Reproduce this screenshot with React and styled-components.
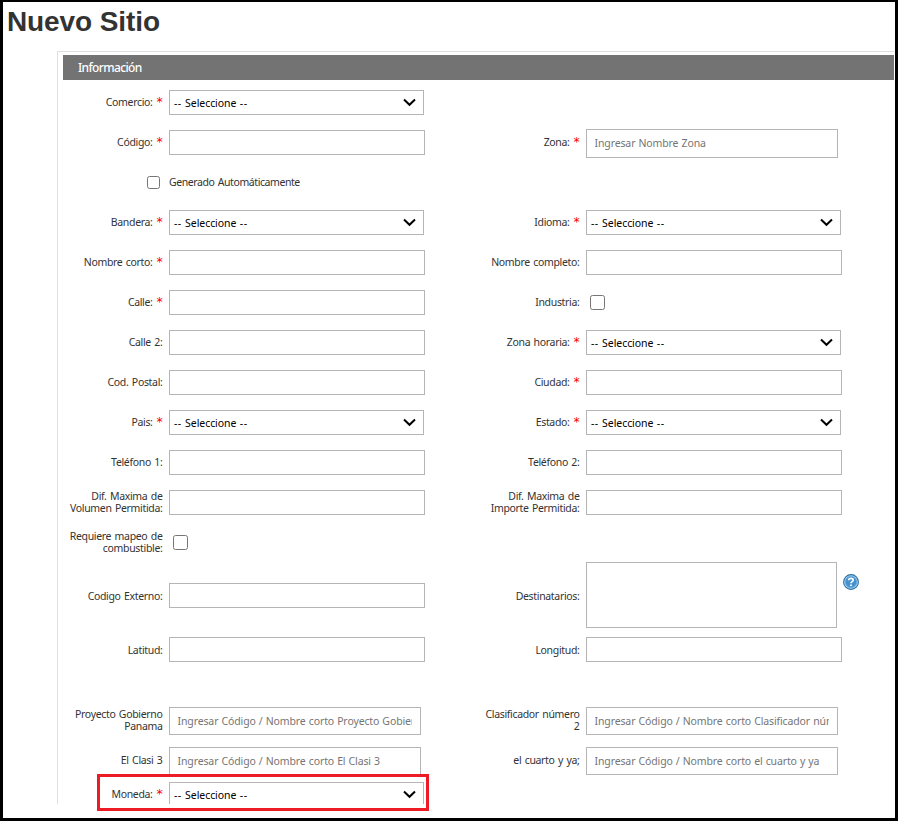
import React from "react";
import styled, { createGlobalStyle } from "styled-components";

const GlobalStyle = createGlobalStyle`
  *, *::before, *::after { box-sizing: border-box; }
  body {
    margin: 0;
    background: #fff;
    color: #333;
    font-family: "Noto Sans", "Open Sans", sans-serif;
    font-size: 10.5px;
  }
`;

const Frame = styled.main`
  position: relative;
  width: 898px;
  height: 821px;
  padding-left: 54px;
  overflow: hidden;
  background: #fff;
  border: 3px solid #000;
  border-top-width: 2px;
`;

const Title = styled.h1`
  height: 49px;
  margin: 0 0 0 -50px;
  padding-top: 4px;
  color: #333;
  font: bold 28px/32px "Liberation Sans", Arial, sans-serif;
  letter-spacing: -0.1px;
`;

const Panel = styled.section`
  width: 837px;
  height: 753px;
  padding: 3px 0 0 5px;
  overflow: hidden;
  border: solid #dfe0dc;
  border-width: 1px 0 0 1px;
`;

const PanelHeader = styled.h2`
  height: 25px;
  margin: 0 0 3px;
  padding-left: 15px;
  background: #737373;
  color: #fff;
  font-size: 12px;
  font-weight: 500;
  line-height: 25px;
  letter-spacing: -0.65px;
`;

const Row = styled.div`
  display: flex;
  height: ${(p) => p.$height || 39}px;
  margin-top: ${(p) => p.$top || 0}px;
  margin-bottom: ${(p) => p.$bottom || 0}px;
`;

const Cell = styled.div`
  display: flex;
  flex: none;
  align-items: center;
  gap: 6px;
  width: 417px;
`;

const Label = styled.label`
  flex: none;
  width: 100px;
  padding-top: ${(p) => (p.$shift > 0 ? p.$shift * 2 : 0)}px;
  padding-right: 0.5px;
  padding-bottom: ${(p) => 1 + (p.$shift < 0 ? -p.$shift * 2 : 0)}px;
  text-align: right;
  line-height: 12px;
  letter-spacing: -0.33px;
  word-spacing: 1px;
  white-space: pre-line;
`;

const Required = styled.span`
  margin-left: 4px;
  color: #f00;
  font: 12.5px/10px "DejaVu Sans", sans-serif;
`;

const TextInput = styled.input`
  width: 256px;
  height: 25px;
  padding: 0 4px;
  background: #fff;
  border: 1px solid #b5b5b5;
  border-radius: 0;
  font: inherit;
`;

const LookupInput = styled(TextInput)`
  width: 252px;
  height: ${(p) => p.$height || 28}px;
  margin-top: ${(p) => p.$top || 0}px;
  padding: 0 8px ${(p) => p.$top || 0}px 7.5px;
  letter-spacing: -0.12px;
  word-spacing: 0.5px;

  &::placeholder { color: #757575; opacity: 1; }
`;

const SelectBox = styled.div`
  display: flex;
  align-items: center;
  justify-content: space-between;
  width: 255px;
  height: 25px;
  padding: 0 7px 0 4px;
  border: 1px solid #b5b5b5;
  color: #000;
  line-height: 23px;
`;

const SelectText = styled.span`
  padding-top: 2px;
  line-height: 21px;
  letter-spacing: -0.07px;
  word-spacing: 0.9px;
`;

const Dashes = styled.span`
  letter-spacing: 0.4px;
`;

const Checkbox = styled.input`
  appearance: none;
  flex: none;
  width: ${(p) => p.$size}px;
  height: ${(p) => p.$size}px;
  margin: 0 0 0 ${(p) => p.$left}px;
  background: #fff;
  border: 1px solid #767676;
  border-radius: 2.5px;
`;

const AutoText = styled.label`
  margin-left: 3px;
  padding-bottom: 1px;
  letter-spacing: -0.42px;
  word-spacing: 1px;
`;

const TextArea = styled.textarea`
  align-self: flex-start;
  width: 251px;
  height: 66px;
  border: 1px solid #b5b5b5;
  resize: none;
`;

const HelpIcon = styled.svg`
  align-self: flex-start;
  flex: none;
  margin-top: 12px;
`;

const Highlight = styled.div`
  position: absolute;
  left: 94px;
  top: 772px;
  width: 332px;
  height: 37px;
  border: 3px solid #ed1c24;
`;

function Select() {
  return (
    <SelectBox>
      <SelectText>
        <Dashes>--</Dashes> Seleccione <Dashes>--</Dashes>
      </SelectText>
      <svg width="13" height="9" viewBox="0 0 13 9" fill="none">
        <path d="M1 1.6 6.5 6.8 12 1.6" stroke="#000" strokeWidth="2" />
      </svg>
    </SelectBox>
  );
}

function Help() {
  return (
    <HelpIcon width="16" height="16" viewBox="0 0 16 16">
      <circle cx="8" cy="8" r="7.4" fill="#a9d5f3" stroke="#2c71a3" strokeWidth="1.1" />
      <circle cx="8" cy="8" r="5.7" fill="#4590d0" stroke="#68aade" strokeWidth=".8" />
      <path d="M5.7 6.2C5.7 3.6 10.4 3.7 10.2 6.2 10.1 7.6 8 7.6 8 9.2" fill="none" stroke="#fff" strokeWidth="1.7" />
      <rect x="7.1" y="10.5" width="1.8" height="1.6" fill="#fff" />
    </HelpIcon>
  );
}

const CONTROLS = {
  text: () => <TextInput />,
  select: () => <Select />,
  zone: () => <LookupInput $height={29} $top={2} placeholder="Ingresar Nombre Zona" />,
  lookup: ({ hint }) => <LookupInput placeholder={hint} />,
  check: () => <Checkbox type="checkbox" $size={15} $left={4} />,
  area: () => (
    <>
      <TextArea />
      <Help />
    </>
  ),
};

function Field({ label, required, type = "text", hint, shift }) {
  const Control = CONTROLS[type];
  return (
    <Cell>
      <Label $shift={shift}>
        {label}
        {required && <Required>*</Required>}
      </Label>
      <Control hint={hint} />
    </Cell>
  );
}

const f = (label, type, required, hint) => ({ label, type, required, hint });

const ROWS = [
  { fields: [f("Comercio:", "select", true)] },
  { fields: [f("Código:", "text", true), f("Zona:", "zone", true)] },
  { auto: true },
  { fields: [f("Bandera:", "select", true), f("Idioma:", "select", true)] },
  { fields: [f("Nombre corto:", "text", true), f("Nombre completo:", "text")] },
  { fields: [f("Calle:", "text", true), f("Industria:", "check")] },
  { fields: [f("Calle 2:", "text"), f("Zona horaria:", "select", true)] },
  { fields: [f("Cod. Postal:", "text"), f("Ciudad:", "text", true)] },
  { fields: [f("Pais:", "select", true), f("Estado:", "select", true)] },
  { fields: [f("Teléfono 1:", "text"), f("Teléfono 2:", "text")] },
  { fields: [f("Dif. Maxima de\nVolumen Permitida:", "text"), f("Dif. Maxima de\nImporte Permitida:", "text")] },
  { fields: [f("Requiere mapeo de\ncombustible:", "check")], bottom: 0 },
  { height: 67, bottom: 0, shift: 1, fields: [f("Codigo Externo:", "text"), f("Destinatarios:", "area")] },
  { height: 41, bottom: 0, shift: 1, fields: [f("Latitud:", "text"), f("Longitud:", "text")] },
  {
    height: 40, top: 31, bottom: 0, shift: -1,
    fields: [
      f("Proyecto Gobierno\nPanama", "lookup", false, "Ingresar Código / Nombre corto Proyecto Gobierno Panama"),
      f("Clasificador número\n2", "lookup", false, "Ingresar Código / Nombre corto Clasificador número 2"),
    ],
  },
  {
    height: 40, bottom: 1, shift: -1,
    fields: [
      f("El Clasi 3", "lookup", false, "Ingresar Código / Nombre corto El Clasi 3"),
      f("el cuarto y ya;", "lookup", false, "Ingresar Código / Nombre corto el cuarto y ya"),
    ],
  },
  { height: 25, bottom: 0, fields: [f("Moneda:", "select", true)] },
];

export default function App() {
  return (
    <>
      <GlobalStyle />
      <Frame>
        <Title>Nuevo Sitio</Title>
        <Panel>
          <PanelHeader>Información</PanelHeader>
          {ROWS.map((row, i) => (
            <Row key={i} $height={row.height} $top={row.top} $bottom={row.bottom ?? 1}>
              {row.auto ? (
                <Cell>
                  <Checkbox type="checkbox" id="auto" $size={13} $left={84} />
                  <AutoText htmlFor="auto">Generado Automáticamente</AutoText>
                </Cell>
              ) : (
                row.fields.map((field) => (
                  <Field key={field.label} shift={row.shift || 0} {...field} />
                ))
              )}
            </Row>
          ))}
        </Panel>
        <Highlight />
      </Frame>
    </>
  );
}
